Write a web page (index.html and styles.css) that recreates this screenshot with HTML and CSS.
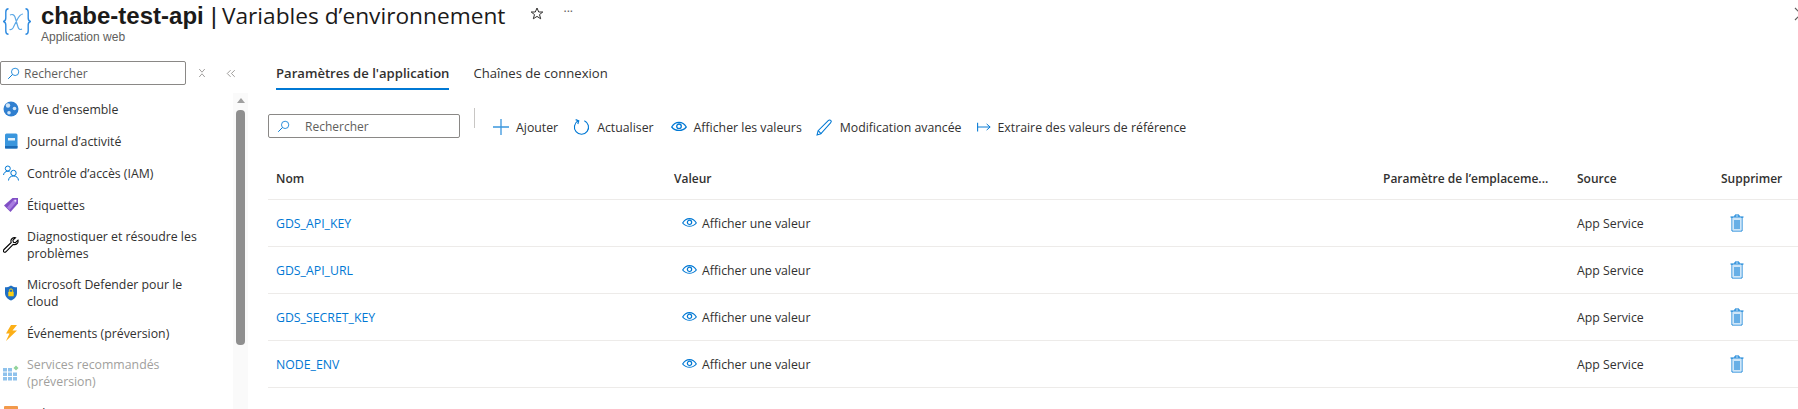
FILE: index.html
```html
<!DOCTYPE html>
<html lang="fr">
    <head>
        <title>Variables d'environnement</title>
        <meta charset="UTF-8">
        <link rel="stylesheet" href="styles.css">
    </head>
    <body>
        <header class="page-header">
            <svg class="res-icon" viewBox="0 0 28 27"><path d="M5.500 .7C3 .7 2.800 2 2.800 4v6c0 2-.8 3-2.300 3.500 1.500 .5 2.300 1.500 2.300 3.500v6c0 2 .2 3.300 2.700 3.300M22.500 .7c2.500 0 2.700 1.300 2.700 3.300v6c0 2 .8 3 2.300 3.500-1.500 .5-2.300 1.500-2.300 3.500v6c0 2-.2 3.300-2.700 3.300" fill="none" stroke="#2f8be0" stroke-width="1.400"/><path d="M7 7c2-1 4-.5 5 2l3 10c.8 2.500 2 3 4 2M20 6c-2 0-4 2-6 6l-4 8c-1 1.500-2 2-3.500 1.500" fill="none" stroke="#5ea9e6" stroke-width="1.200"/></svg>
            <div class="title-block">
                <h1><strong>chabe-test-api</strong><span class="bar">|</span><span class="title-light">Variables d’environnement</span></h1>
                <div class="subtitle">Application web</div>
            </div>
            <svg class="star" viewBox="0 0 16 16"><path d="M8 2l1.700 4h4.100l-3.300 2.600 1.200 4.200L8 10.400l-3.700 2.400 1.200-4.200L2.200 6h4.100z" fill="none" stroke="#323130" stroke-width="1"/></svg>
            <div class="dots">···</div>
            <svg class="close" viewBox="0 0 16 16"><path d="M2 2l12 12M14 2L2 14" stroke="#605e5c" stroke-width="1.200"/></svg>
        </header>

        <div class="main">
            <aside class="sidebar">
                <div class="side-top">
                    <div class="search side-search">
                        <svg class="search-icon" viewBox="0 0 16 16"><circle cx="10" cy="6" r="4.500" fill="none" stroke="#0078d4" stroke-width="1"/><path d="M6.700 9.300L1.500 14.500" stroke="#0078d4" stroke-width="1.200"/></svg>
                        <span>Rechercher</span>
                    </div>
                    <svg class="side-btn pin" viewBox="0 0 10 12"><path d="M1.500 1l3.500 4 3.500-4M1.500 11L5 7l3.500 4" fill="none" stroke="#8a8886" stroke-width="1"/></svg>
                    <svg class="side-btn collapse" viewBox="0 0 12 10"><path d="M5.500 1L1.500 5l4 4M10.500 1l-4 4 4 4" fill="none" stroke="#8a8886" stroke-width="1"/></svg>
                </div>
                <div class="side-body">
                    <ul class="side-nav">
                        <li>
                            <svg class="nav-icon" viewBox="0 0 16 16"><circle cx="8" cy="8" r="7.500" fill="#2f7fd0"/><circle cx="5" cy="4.500" r="2.200" fill="#cfe4f7"/><circle cx="11.500" cy="7.500" r="1.800" fill="#cfe4f7"/><circle cx="6" cy="11.800" r="1.800" fill="#cfe4f7"/></svg>
                            <span>Vue d'ensemble</span>
                        </li>
                        <li>
                            <svg class="nav-icon" viewBox="0 0 16 16"><rect x="2" y="0.500" width="12.500" height="15" rx="1.500" fill="#3a96dd"/><rect x="2" y="13" width="12.500" height="2.500" fill="#1b6ab5"/><rect x="5" y="5" width="7" height="2.500" fill="#e6f2fb"/></svg>
                            <span>Journal d’activité</span>
                        </li>
                        <li>
                            <svg class="nav-icon" viewBox="0 0 16 16"><g fill="none" stroke="#0078d4" stroke-width="1"><circle cx="4.800" cy="3.500" r="2.500"/><path d="M0.500 10c.5-2.500 2-3.700 4.300-3.700 .8 0 1.300.1 1.800.4"/><circle cx="10.500" cy="8" r="2.700"/><path d="M5.500 15.500c.3-3 2-4.500 5-4.500s4.700 1.500 5 4.500"/></g></svg>
                            <span>Contrôle d’accès (IAM)</span>
                        </li>
                        <li>
                            <svg class="nav-icon" viewBox="0 0 16 16"><path d="M9.500 1H15v5.500L7.500 15 1 8.500z" fill="#804fc5"/><path d="M11 2.500h2.500V5L6.500 13 4 10.500z" fill="#a77ce0"/><circle cx="12.300" cy="3.700" r="1" fill="#e8dcf7"/></svg>
                            <span>Étiquettes</span>
                        </li>
                        <li class="two-line">
                            <svg class="nav-icon" viewBox="0 0 16 16"><path d="M15 3.200l-2.600 2.500-2-.5-.5-2L12.500.8C10.300.2 8 1.500 7.900 3.800c0 .7.100 1.200.3 1.700L1 12.500c-.8.800-.8 1.700-.2 2.300s1.500.6 2.300-.2l7.100-7.200c.6.200 1.100.3 1.700.2 2.300-.2 3.600-2.200 3.100-4.400z" fill="#fff" stroke="#000" stroke-width="1.100"/></svg>
                            <span>Diagnostiquer et résoudre les problèmes</span>
                        </li>
                        <li class="two-line">
                            <svg class="nav-icon" viewBox="0 0 16 16"><path d="M8 .5c1.800 1.300 3.800 1.800 6 1.800V8c0 3.500-2.500 6-6 7.500C4.500 14 2 11.500 2 8V2.300C4.200 2.300 6.200 1.800 8 .5z" fill="#1f6fc4"/><rect x="5.300" y="6.800" width="5.400" height="4.500" rx=".6" fill="#fcd116"/><path d="M6.400 6.800V5.500a1.600 1.600 0 013.200 0v1.300" fill="none" stroke="#fcd116" stroke-width="1"/></svg>
                            <span>Microsoft Defender pour le cloud</span>
                        </li>
                        <li>
                            <svg class="nav-icon" viewBox="0 0 16 16"><path d="M8 0h6L9.500 5.500H14L3 16l3.500-7.500H3z" fill="#fcaf17"/></svg>
                            <span>Événements (préversion)</span>
                        </li>
                        <li class="two-line disabled">
                            <svg class="nav-icon" viewBox="0 0 16 16"><g fill="#8fc2ec"><rect x="0" y="3" width="4" height="3.500"/><rect x="5" y="3" width="4" height="3.500"/><rect x="0" y="7.500" width="4" height="3.500"/><rect x="5" y="7.500" width="4" height="3.500"/><rect x="10" y="7.500" width="4" height="3.500"/><rect x="0" y="12" width="4" height="3.500"/><rect x="5" y="12" width="4" height="3.500"/><rect x="10" y="12" width="4" height="3.500"/></g><path d="M13 .500l2.500 2.500-2.500 2.500L10.500 3z" fill="#92d39a"/></svg>
                            <span>Services recommandés (préversion)</span>
                        </li>
                        <li>
                            <svg class="nav-icon" viewBox="0 0 16 16"><rect x="1" y="1" width="14" height="14" rx="1" fill="#f2994a"/><rect x="3" y="5" width="10" height="9" fill="#fde3c8"/></svg>
                            <span>Fichiers</span>
                        </li>
                    </ul>
                    <div class="scrollbar">
                        <div class="arrow"></div>
                        <div class="thumb"></div>
                    </div>
                </div>
            </aside>

            <section class="content">
                <nav class="tabs">
                    <a class="tab active">Paramètres de l'application</a>
                    <a class="tab">Chaînes de connexion</a>
                </nav>

                <div class="toolbar">
                    <div class="search table-search">
                        <svg class="search-icon" viewBox="0 0 16 16"><circle cx="10" cy="6" r="4.500" fill="none" stroke="#0078d4" stroke-width="1"/><path d="M6.700 9.300L1.500 14.500" stroke="#0078d4" stroke-width="1.200"/></svg>
                        <span>Rechercher</span>
                    </div>
                    <div class="divider"></div>
                    <button class="cmd cmd-add">
                        <svg viewBox="0 0 16 16"><path d="M8 0v16M0 8h16" stroke="#3a96dd" stroke-width="1.300"/></svg>
                        Ajouter
                    </button>
                    <button class="cmd cmd-refresh">
                        <svg viewBox="0 0 18 18"><path d="M5.500 2.500A7.500 7.500 0 1 0 12 2.300" fill="none" stroke="#0078d4" stroke-width="1.200"/><path d="M2.800 1.200l3.300 1.300-1 3.300" fill="none" stroke="#0078d4" stroke-width="1.200"/></svg>
                        Actualiser
                    </button>
                    <button class="cmd cmd-show">
                        <svg viewBox="0 0 16 12"><path d="M.7 6C2.500 2.800 5 1.300 8 1.300S13.500 2.800 15.300 6C13.500 8.200 11 9.500 8 9.500S2.500 8.200.7 6z" fill="none" stroke="#0078d4" stroke-width="1.200"/><circle cx="8" cy="5.300" r="2.300" fill="none" stroke="#0078d4" stroke-width="1.300"/></svg>
                        Afficher les valeurs
                    </button>
                    <button class="cmd cmd-edit">
                        <svg viewBox="0 0 16 16"><path d="M1 15l1-4L11.500 1.500c.8-.8 1.800-.8 2.400-.2s.6 1.600-.2 2.400L4.500 14z" fill="none" stroke="#0078d4" stroke-width="1"/><path d="M2 11l3 3" stroke="#0078d4" stroke-width="1"/></svg>
                        Modification avancée
                    </button>
                    <button class="cmd cmd-pull">
                        <svg viewBox="0 0 16 12"><path d="M.7 1v10" stroke="#0078d4" stroke-width="1.200"/><path d="M1 6h14M11 2.500L15 6l-4 3.500" fill="none" stroke="#0078d4" stroke-width="1.100"/></svg>
                        Extraire des valeurs de référence
                    </button>
                </div>

                <div class="table">
                    <div class="row head">
                        <div>Nom</div>
                        <div>Valeur</div>
                        <div>Paramètre de l’emplaceme...</div>
                        <div>Source</div>
                        <div>Supprimer</div>
                    </div>
                    <div class="row">
                        <div><a class="name">GDS_API_KEY</a></div>
                        <div class="value"><svg viewBox="0 0 16 12"><path d="M.7 6C2.500 2.800 5 1.300 8 1.300S13.500 2.800 15.300 6C13.500 8.200 11 9.500 8 9.500S2.500 8.200.7 6z" fill="none" stroke="#0078d4" stroke-width="1.200"/><circle cx="8" cy="5.300" r="2.300" fill="none" stroke="#0078d4" stroke-width="1.300"/></svg>Afficher une valeur</div>
                        <div></div>
                        <div>App Service</div>
                        <div class="trash"><svg viewBox="0 0 14 18"><path d="M.5 3h13M5 3V1h4v2M2 3v14h10V3" fill="none" stroke="#0078d4" stroke-width="1"/><rect x="2.500" y="4" width="9" height="12.500" fill="#cfe6f8"/><path d="M5 6v9M7 6v9M9 6v9" stroke="#0078d4" stroke-width="1"/></svg></div>
                    </div>
                    <div class="row">
                        <div><a class="name">GDS_API_URL</a></div>
                        <div class="value"><svg viewBox="0 0 16 12"><path d="M.7 6C2.500 2.800 5 1.300 8 1.300S13.500 2.800 15.300 6C13.500 8.200 11 9.500 8 9.500S2.500 8.200.7 6z" fill="none" stroke="#0078d4" stroke-width="1.200"/><circle cx="8" cy="5.300" r="2.300" fill="none" stroke="#0078d4" stroke-width="1.300"/></svg>Afficher une valeur</div>
                        <div></div>
                        <div>App Service</div>
                        <div class="trash"><svg viewBox="0 0 14 18"><path d="M.5 3h13M5 3V1h4v2M2 3v14h10V3" fill="none" stroke="#0078d4" stroke-width="1"/><rect x="2.500" y="4" width="9" height="12.500" fill="#cfe6f8"/><path d="M5 6v9M7 6v9M9 6v9" stroke="#0078d4" stroke-width="1"/></svg></div>
                    </div>
                    <div class="row">
                        <div><a class="name">GDS_SECRET_KEY</a></div>
                        <div class="value"><svg viewBox="0 0 16 12"><path d="M.7 6C2.500 2.800 5 1.300 8 1.300S13.500 2.800 15.300 6C13.500 8.200 11 9.500 8 9.500S2.500 8.200.7 6z" fill="none" stroke="#0078d4" stroke-width="1.200"/><circle cx="8" cy="5.300" r="2.300" fill="none" stroke="#0078d4" stroke-width="1.300"/></svg>Afficher une valeur</div>
                        <div></div>
                        <div>App Service</div>
                        <div class="trash"><svg viewBox="0 0 14 18"><path d="M.5 3h13M5 3V1h4v2M2 3v14h10V3" fill="none" stroke="#0078d4" stroke-width="1"/><rect x="2.500" y="4" width="9" height="12.500" fill="#cfe6f8"/><path d="M5 6v9M7 6v9M9 6v9" stroke="#0078d4" stroke-width="1"/></svg></div>
                    </div>
                    <div class="row">
                        <div><a class="name">NODE_ENV</a></div>
                        <div class="value"><svg viewBox="0 0 16 12"><path d="M.7 6C2.500 2.800 5 1.300 8 1.300S13.500 2.800 15.300 6C13.500 8.200 11 9.500 8 9.500S2.500 8.200.7 6z" fill="none" stroke="#0078d4" stroke-width="1.200"/><circle cx="8" cy="5.300" r="2.300" fill="none" stroke="#0078d4" stroke-width="1.300"/></svg>Afficher une valeur</div>
                        <div></div>
                        <div>App Service</div>
                        <div class="trash"><svg viewBox="0 0 14 18"><path d="M.5 3h13M5 3V1h4v2M2 3v14h10V3" fill="none" stroke="#0078d4" stroke-width="1"/><rect x="2.500" y="4" width="9" height="12.500" fill="#cfe6f8"/><path d="M5 6v9M7 6v9M9 6v9" stroke="#0078d4" stroke-width="1"/></svg></div>
                    </div>
                </div>
            </section>
        </div>
    </body>
</html>
```

FILE: styles.css
```css
html, body {
    height: 409px;
    overflow: hidden;
}
body {
    margin: 0;
    background-color: #fff;
    color: #323130;
    font-family: "Open Sans", "Noto Sans", sans-serif;
    font-size: 12.3px;
}

/* page title */
.page-header {
    display: flex;
    align-items: flex-start;
    height: 54px;
    overflow: hidden;
}
.res-icon {
    width: 28px;
    height: 27px;
    margin: 8px 10px 0 3px;
    flex-shrink: 0;
}
h1 {
    margin: 0;
    font-size: 24px;
    font-weight: 400;
    line-height: 29px;
    color: #1b1a19;
    white-space: nowrap;
}
h1 strong {
    font-family: "Liberation Sans", Arial, sans-serif;
    font-weight: 700;
}
.title-light {
    font-size: 22.7px;
}
.bar {
    margin: 0 5px 0 7px;
    font-family: "Liberation Sans", Arial, sans-serif;
}
.subtitle {
    margin-top: 0;
    font-family: "Liberation Sans", Arial, sans-serif;
    font-size: 12px;
    line-height: 14px;
    color: #605e5c;
}
.star {
    width: 16px;
    height: 16px;
    margin: 6px 0 0 24px;
}
.dots {
    margin: 2px 0 0 18px;
    color: #605e5c;
    line-height: 20px;
}
.close {
    width: 16px;
    height: 16px;
    margin: 6px -11px 0 auto;
}

.main {
    display: flex;
    height: 355px;
}

/* left menu */
.sidebar {
    width: 250px;
    flex-shrink: 0;
    overflow: hidden;
}
.side-top {
    display: flex;
    align-items: center;
    height: 24px;
    margin-top: 7px;
}
.search {
    display: flex;
    align-items: center;
    box-sizing: border-box;
    height: 24px;
    border: 1px solid #8a8886;
    border-radius: 2px;
    color: #605e5c;
    font-size: 12px;
}
.search-icon {
    width: 13px;
    height: 13px;
    flex-shrink: 0;
}
.side-search {
    width: 186px;
    padding-left: 6px;
    gap: 4px;
}
.side-btn {
    flex-shrink: 0;
}
.pin {
    width: 8px;
    height: 10px;
    margin-left: 12px;
}
.collapse {
    width: 10px;
    height: 9px;
    margin-left: 20px;
}
.side-body {
    display: flex;
    margin-top: 8px;
}
.side-nav {
    width: 233px;
    margin: 0;
    padding: 0;
    list-style: none;
    flex-shrink: 0;
}
.side-nav li {
    display: flex;
    align-items: center;
    gap: 8px;
    padding: 7.5px 28px 7.5px 3px;
    line-height: 17px;
    color: #323130;
}
.side-nav li.two-line {
    padding-top: 7px;
    padding-bottom: 7px;
}
.side-nav li.disabled {
    color: #a19f9d;
}
.nav-icon {
    width: 16px;
    height: 16px;
    flex-shrink: 0;
}
.scrollbar {
    width: 15px;
    height: 316px;
    background-color: #fafafa;
    flex-shrink: 0;
}
.arrow {
    width: 0;
    margin: 5px auto 7px;
    border-left: 4px solid transparent;
    border-right: 4px solid transparent;
    border-bottom: 5px solid #a0a0a0;
}
.thumb {
    width: 9px;
    height: 235px;
    margin: 0 auto;
    background-color: #8f8f8f;
    border-radius: 4px;
}

/* right side */
.content {
    flex: 1;
    padding-left: 18px;
    min-width: 0;
}
.tabs {
    display: flex;
    gap: 24px;
    padding-left: 8px;
}
.tab {
    padding: 9px 0 5px;
    font-size: 13.1px;
    line-height: 20px;
    color: #323130;
    border-bottom: 2px solid transparent;
}
.tab.active {
    font-weight: 600;
    border-bottom-color: #0078d4;
}
.toolbar {
    display: flex;
    align-items: flex-start;
    height: 50px;
    margin-top: 18px;
}
.table-search {
    width: 192px;
    margin-top: 6px;
    padding-left: 8px;
    gap: 15px;
}
.divider {
    width: 1px;
    height: 20px;
    margin: 0 18px 0 14px;
    background-color: #c8c6c4;
}
.cmd {
    display: flex;
    align-items: center;
    height: 26px;
    margin: 6px 15px 0 0;
    padding: 0;
    gap: 7px;
    border: 0;
    background: none;
    color: #323130;
    font-family: inherit;
    font-size: 12.3px;
    white-space: nowrap;
}
.cmd-refresh { margin-right: 17px; }
.cmd-show { margin-right: 14px; }
.cmd-add svg { width: 16px; height: 16px; }
.cmd-refresh svg { width: 17px; height: 18px; }
.cmd-show svg { width: 16px; height: 12px; }
.cmd-edit svg { width: 17px; height: 17px; }
.cmd-pull svg { width: 14px; height: 12px; }

.row {
    display: grid;
    grid-template-columns: 398px 709px 194px 144px 1fr;
    align-items: center;
    height: 47px;
    box-sizing: border-box;
    border-bottom: 1px solid #edebe9;
}
.row > div {
    padding-left: 8px;
}
.row.head {
    height: 42px;
    padding-bottom: 1px;
    font-size: 12px;
    font-weight: 600;
}
.name {
    color: #0078d4;
}
.row > .value {
    display: flex;
    align-items: center;
    gap: 5px;
    padding-left: 16px;
}
.value svg {
    width: 15px;
    height: 12px;
}
.row > .trash {
    padding-left: 17px;
    height: 18px;
}
.trash svg {
    display: block;
    width: 14px;
    height: 18px;
}
```
